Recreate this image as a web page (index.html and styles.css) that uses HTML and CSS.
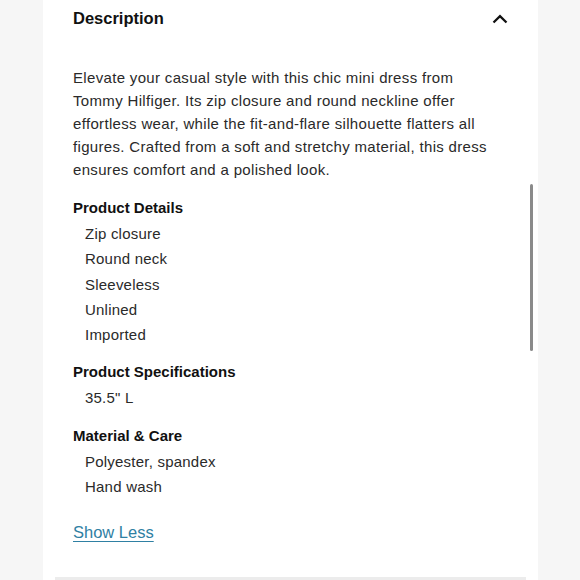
FILE: index.html
```html
<!DOCTYPE html>
<html lang="en">
<head>
<meta charset="utf-8">
<link rel="stylesheet" href="styles.css">
</head>
<body>
<div class="page">
  <section class="card">
    <header class="card-head">
      <h2 class="title">Description</h2>
      <svg class="chevron" width="16" height="10" viewBox="0 0 16 10"><path d="M1.5 8.5 L8 2.2 L14.5 8.5" fill="none" stroke="#111" stroke-width="2.3"/></svg>
    </header>
    <p class="desc">Elevate your casual style with this chic mini dress from Tommy Hilfiger. Its zip closure and round neckline offer effortless wear, while the fit-and-flare silhouette flatters all figures. Crafted from a soft and stretchy material, this dress ensures comfort and a polished look.</p>
    <div class="details">
      <div class="group">
        <h3 class="group-title">Product Details</h3>
        <ul class="items">
          <li>Zip closure</li>
          <li>Round neck</li>
          <li>Sleeveless</li>
          <li>Unlined</li>
          <li>Imported</li>
        </ul>
      </div>
      <div class="group">
        <h3 class="group-title">Product Specifications</h3>
        <ul class="items">
          <li>35.5" L</li>
        </ul>
      </div>
      <div class="group">
        <h3 class="group-title">Material &amp; Care</h3>
        <ul class="items">
          <li>Polyester, spandex</li>
          <li>Hand wash</li>
        </ul>
      </div>
    </div>
    <a class="toggle" href="#">Show Less</a>
    <div class="divider"></div>
    <div class="scrollbar"></div>
  </section>
</div>
</body>
</html>
```
FILE: styles.css
```css
html, body {
  margin: 0;
  padding: 0;
}
body {
  background: #f6f6f6;
  font-family: "Liberation Sans", Arial, sans-serif;
  color: #222;
}
.page {
  width: 580px;
  height: 580px;
  overflow: hidden;
  padding-left: 43px;
  box-sizing: border-box;
}
.card {
  position: relative;
  width: 495px;
  height: 580px;
  background: #fff;
  box-sizing: border-box;
  padding: 0 0 0 30px;
}
.card-head {
  display: flex;
  align-items: center;
  justify-content: space-between;
  height: 36px;
  padding-right: 30px;
}
.title {
  margin: 0;
  font-size: 16.5px;
  font-weight: 700;
  color: #111;
}
.chevron {
  display: block;
  margin-top: 1px;
}
.desc {
  margin: 30px 0 0;
  width: 422px;
  font-size: 15px;
  line-height: 23px;
  letter-spacing: 0.33px;
  color: #2a2a2a;
}
.details {
  padding-top: 3px;
}
.group {
  margin-top: 14px;
}
.group + .group {
  margin-top: 15px;
}
.group-title {
  margin: 0;
  font-size: 15px;
  font-weight: 700;
  line-height: 20px;
  color: #111;
}
.items {
  list-style: none;
  margin: 3px 0 0;
  padding: 0 0 0 12px;
}
.items li {
  font-size: 15px;
  line-height: 25.3px;
  letter-spacing: 0.22px;
  color: #2a2a2a;
}
.toggle {
  display: inline-block;
  margin-top: 24px;
  font-size: 16.5px;
  color: #2f80a3;
  text-decoration: underline;
  text-underline-offset: 3px;
}
.divider {
  position: absolute;
  left: 12px;
  right: 12px;
  bottom: 0;
  height: 3px;
  background: #ececec;
}
.scrollbar {
  position: absolute;
  left: 487px;
  top: 184px;
  width: 3px;
  height: 167px;
  border-radius: 2px;
  background: #8a8a8a;
}
```
